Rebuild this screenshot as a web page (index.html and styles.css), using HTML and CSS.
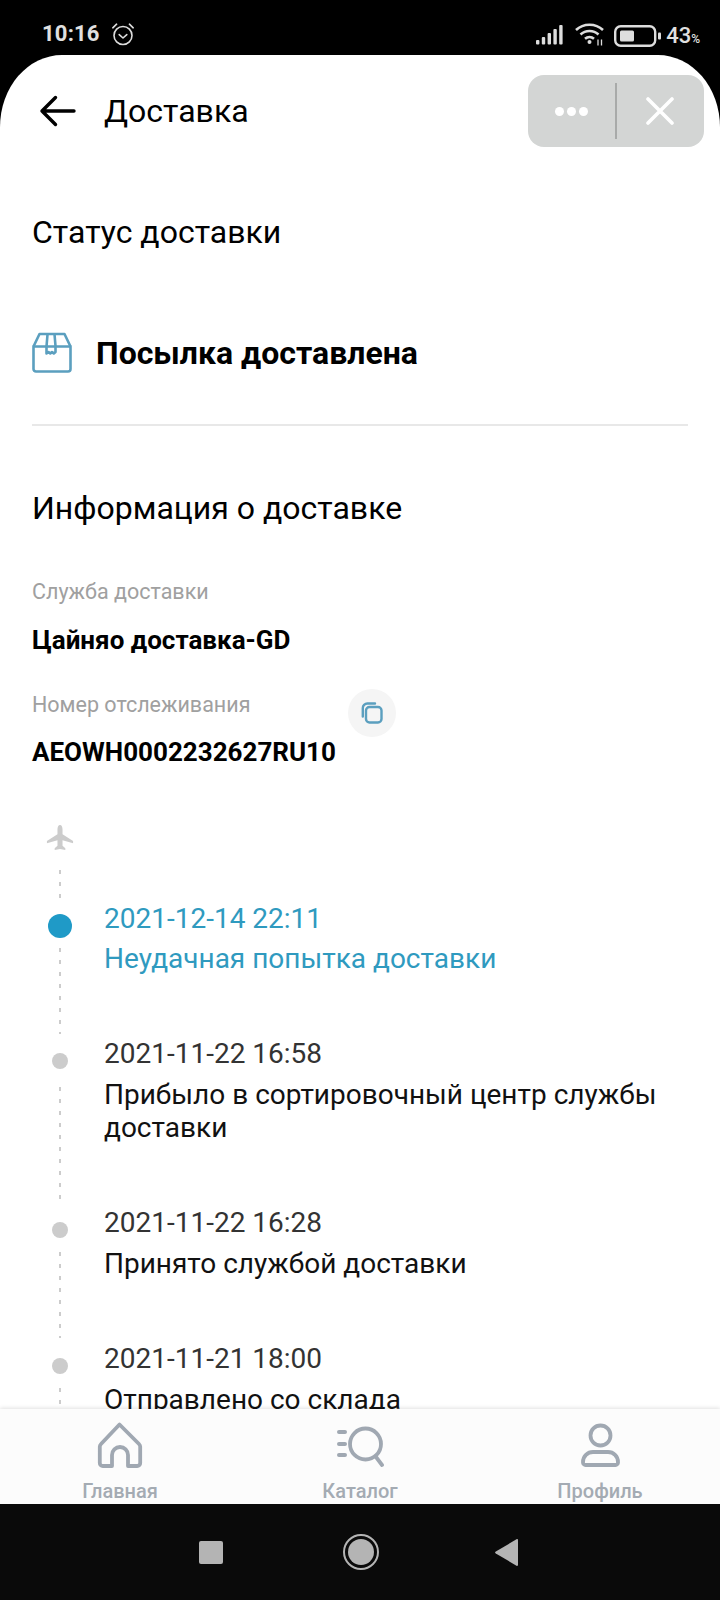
FILE: index.html
```html
<!DOCTYPE html>
<html lang="ru">

<head>
    <meta charset="UTF-8">
    <meta name="viewport" content="width=device-width, initial-scale=1.0">
    <title>Доставка</title>
    <link rel="stylesheet" href="styles.css">
</head>

<body>
    <div class="phone">
        <div class="statusbar">
            <div class="status-left">
                <span class="clock">10:16</span>
                <svg class="alarm" width="24" height="24" viewBox="0 0 24 24" fill="none" stroke="#ddd" stroke-width="1.6">
                    <circle cx="12" cy="13.500" r="9" />
                    <path d="M8.200 12.600l3.800 3.400 3.800-3.400" stroke-linecap="round" stroke-linejoin="round" />
                    <path d="M1.800 5.800l3.800-3.600M22.200 5.800L18.400 2.200" stroke-linecap="round" />
                </svg>
            </div>
            <div class="status-right">
                <svg class="signal" width="27" height="20" viewBox="0 0 27 20" fill="#ddd">
                    <rect x="0" y="15" width="3.400" height="4.500" rx="1" />
                    <rect x="5.800" y="12" width="3.400" height="7.500" rx="1" />
                    <rect x="11.600" y="8" width="3.400" height="11.500" rx="1" />
                    <rect x="17.400" y="4" width="3.400" height="15.500" rx="1" />
                    <rect x="23.200" y="0" width="3.400" height="19.500" rx="1" />
                </svg>
                <svg class="wifi" width="29" height="24" viewBox="0 0 29 24" fill="none" stroke="#ddd" stroke-width="2.600">
                    <path d="M1 8c7.500-7 19.500-7 27 0" />
                    <path d="M5.500 12.500c5-4.600 13-4.600 18 0" />
                    <path d="M10 16.800c2.600-2.200 6.400-2.200 9 0" />
                    <circle cx="14.500" cy="20" r="2" fill="#ddd" stroke="none" />
                    <path d="M23 17.500v6M26.500 17.500v6" stroke-width="1.300" />
                </svg>
                <svg class="battery-icon" width="47" height="22" viewBox="0 0 47 22" fill="none">
                    <rect x="1.200" y="1.200" width="40" height="19.600" rx="5.500" stroke="#ddd" stroke-width="2.400" />
                    <rect x="6" y="5.500" width="14" height="11" rx="1.500" fill="#ddd" />
                    <rect x="44" y="7.500" width="3" height="7" rx="1" fill="#ddd" />
                </svg>
                <span class="battery">43<small>%</small></span>
            </div>
        </div>

        <div class="sheet">
            <div class="topbar">
                <svg class="back" width="38" height="32" viewBox="0 0 38 32" fill="none" stroke="#000" stroke-width="3.400" stroke-linecap="round" stroke-linejoin="round">
                    <path d="M35 16H3M16.500 2.500L3 16l13.500 13.500" />
                </svg>
                <span class="page-title">Доставка</span>
                <div class="capsule">
                    <div class="capsule-more"><i></i><i></i><i></i></div>
                    <div class="capsule-line"></div>
                    <svg class="capsule-close" width="28" height="28" viewBox="0 0 28 28" stroke="#fff" stroke-width="3.600" stroke-linecap="round">
                        <path d="M2 2l24 24M26 2L2 26" />
                    </svg>
                </div>
            </div>

            <div class="content">
                <h2 class="section-title status-title">Статус доставки</h2>
                <div class="status-row">
                    <svg width="40" height="41" viewBox="0 0 40 41" fill="none" stroke="#5b9fbf" stroke-width="2.600" stroke-linejoin="round">
                        <path d="M1.500 14.500h37V37a2.500 2.500 0 0 1-2.500 2.500H4A2.500 2.500 0 0 1 1.500 37z" />
                        <path d="M1.500 14.500L7.500 2h25l6 12.500" />
                        <path d="M15.500 2.500l-1 12v7l2-1.500 1.800 1.500 1.700-1.500 1.800 1.500 1.700-1.500v-6l-1-12" />
                    </svg>
                    <span class="status-text">Посылка доставлена</span>
                </div>
                <div class="divider"></div>

                <h2 class="section-title info-title">Информация о доставке</h2>
                <div class="field-label label-service">Служба доставки</div>
                <div class="field-value">Цайняо доставка-GD</div>
                <div class="tracking-head">
                    <span class="field-label">Номер отслеживания</span>
                    <span class="copy-btn">
                        <svg width="22" height="22" viewBox="0 0 22 22" fill="none" stroke="#5b9fbf" stroke-width="2.400" stroke-linecap="round">
                            <rect x="5" y="5" width="15.500" height="15.500" rx="3.500" />
                            <path d="M1.800 14.500V6A4.500 4.500 0 0 1 6.300 1.500H14" />
                        </svg>
                    </span>
                </div>
                <div class="field-value tracking-value">AEOWH0002232627RU10</div>

                <div class="timeline">
                    <div class="tl-plane">
                        <svg width="28" height="27" viewBox="0 0 30 28" preserveAspectRatio="none" fill="#ccc">
                            <path d="M15 0c1.700 0 2.700 2 2.700 4.500v5.200L29 16.500v2.500l-11.300-3.200v5.800l3 2.400V26l-5.700-1.200L9.300 26v-2l3-2.400v-5.800L1 19v-2.500l11.300-6.800V4.500C12.300 2 13.300 0 15 0z" />
                        </svg>
                        <b class="tl-dash"></b>
                    </div>
                    <div class="tl-item tl-current">
                        <div class="tl-rail"><i class="tl-dot"></i><b class="tl-dash"></b></div>
                        <div class="tl-body">
                            <div class="tl-date">2021-12-14 22:11</div>
                            <div class="tl-text">Неудачная попытка доставки</div>
                        </div>
                    </div>
                    <div class="tl-item tl-two">
                        <div class="tl-rail"><i class="tl-dot"></i><b class="tl-dash"></b></div>
                        <div class="tl-body">
                            <div class="tl-date">2021-11-22 16:58</div>
                            <div class="tl-text">Прибыло в сортировочный центр службы доставки</div>
                        </div>
                    </div>
                    <div class="tl-item">
                        <div class="tl-rail"><i class="tl-dot"></i><b class="tl-dash"></b></div>
                        <div class="tl-body">
                            <div class="tl-date">2021-11-22 16:28</div>
                            <div class="tl-text">Принято службой доставки</div>
                        </div>
                    </div>
                    <div class="tl-item">
                        <div class="tl-rail"><i class="tl-dot"></i><b class="tl-dash"></b></div>
                        <div class="tl-body">
                            <div class="tl-date">2021-11-21 18:00</div>
                            <div class="tl-text">Отправлено со склада</div>
                        </div>
                    </div>
                </div>
            </div>

            <div class="tabbar">
                <div class="tab">
                    <svg width="48" height="48" viewBox="0 0 48 48" fill="none" stroke="#a0a8b2" stroke-width="3.800" stroke-linejoin="round">
                        <path d="M23.500 2.500L5 22a4 4 0 0 0-1.200 3V41a3 3 0 0 0 3 3H16V33a8 8 0 0 1 16 0V44h9.200a3 3 0 0 0 3-3V25a4 4 0 0 0-1.200-3z" />
                    </svg>
                    <span>Главная</span>
                </div>
                <div class="tab">
                    <svg width="48" height="48" viewBox="0 0 48 48" fill="none" stroke="#a0a8b2" stroke-width="3.800" stroke-linecap="round">
                        <circle cx="29.500" cy="22" r="15.500" />
                        <path d="M40 35l6 8" />
                        <path d="M3 10h6M3 22h6M3 33h6" stroke-width="4" />
                    </svg>
                    <span>Каталог</span>
                </div>
                <div class="tab">
                    <svg width="48" height="48" viewBox="0 0 48 48" fill="none" stroke="#a0a8b2" stroke-width="3.800" stroke-linejoin="round">
                        <circle cx="24.500" cy="13.500" r="10" />
                        <path d="M17 30h15a10 10 0 0 1 10 10v.5a2.500 2.500 0 0 1-2.500 2.500H9.500A2.500 2.500 0 0 1 7 40.500V40a10 10 0 0 1 10-10z" />
                    </svg>
                    <span>Профиль</span>
                </div>
            </div>
        </div>

        <div class="navbar">
            <div class="nav-square"></div>
            <div class="nav-circle"><div></div></div>
            <svg class="nav-back" width="23" height="27" viewBox="0 0 23 27" fill="#b4b4b4">
                <path d="M21.500 0.300c.9-.5 1.500 0 1.500 1v24.400c0 1-.6 1.500-1.500 1L.8 14.500c-1-.6-1-1.400 0-2z" />
            </svg>
        </div>
    </div>
</body>

</html>
```

FILE: styles.css
```css
* {
    box-sizing: border-box;
}

html,
body {
    margin: 0;
    padding: 0;
    background: #000;
}

body {
    font-family: Roboto, "Liberation Sans", sans-serif;
    color: #000;
}

.phone {
    width: 720px;
    height: 1600px;
    display: flex;
    flex-direction: column;
    overflow: hidden;
}

/* status bar */
.statusbar {
    height: 55px;
    flex: none;
    background: #000;
    color: #e0e0e0;
    display: flex;
    justify-content: space-between;
    padding: 21px 20px 0 42px;
}

.status-left,
.status-right {
    display: flex;
    align-items: flex-start;
}

.clock {
    font-size: 22px;
    line-height: 26px;
    font-weight: 700;
    letter-spacing: 0.2px;
}

.alarm {
    margin: 1px 0 0 11px;
}

.signal {
    margin-top: 4px;
}

.wifi {
    margin: 1px 0 0 12px;
}

.battery-icon {
    margin: 4px 0 0 10px;
}

.battery {
    font-size: 22px;
    line-height: 26px;
    font-weight: 500;
    margin: 2px 0 0 5px;
}

.battery small {
    font-size: 12px;
}

/* white sheet */
.sheet {
    flex: 1;
    min-height: 0;
    background: #fff;
    border-radius: 62px 62px 0 0 / 72px 72px 0 0;
    display: flex;
    flex-direction: column;
    overflow: hidden;
}

.topbar {
    height: 92px;
    flex: none;
    display: flex;
    align-items: center;
    padding: 19px 16px 0 39px;
}

.page-title {
    font-size: 32px;
    margin-left: 27px;
    flex: 1;
}

.capsule {
    width: 176px;
    height: 72px;
    margin-top: 1px;
    background: #d3d5d4;
    border-radius: 16px;
    display: flex;
    align-items: center;
}

.capsule-more {
    width: 87px;
    display: flex;
    justify-content: center;
    gap: 3px;
}

.capsule-more i {
    width: 9px;
    height: 9px;
    border-radius: 50%;
    background: #fff;
}

.capsule-line {
    width: 2px;
    height: 56px;
    background: #a8aaa9;
}

.capsule-close {
    margin-left: 29px;
}

/* main content */
.content {
    flex: 1;
    min-height: 0;
    overflow: hidden;
    padding: 0 32px;
}

.section-title {
    margin: 0;
    font-size: 32px;
    line-height: 38px;
    font-weight: 400;
}

.status-title {
    margin-top: 66px;
}

.status-row {
    display: flex;
    align-items: center;
    gap: 24px;
    margin-top: 81px;
}

.status-text {
    font-size: 32px;
    font-weight: 700;
    line-height: 40px;
}

.divider {
    height: 2px;
    background: #e8e8e8;
    margin-top: 51px;
}

.info-title {
    margin-top: 63px;
}

.field-label {
    font-size: 21.5px;
    line-height: 24px;
    color: #a0a0a0;
}

.label-service {
    margin-top: 53px;
}

.field-value {
    font-size: 26px;
    line-height: 30px;
    font-weight: 700;
    margin-top: 21px;
}

.tracking-head {
    display: flex;
    align-items: center;
    margin-top: 34px;
    height: 48px;
}

.tracking-head .field-label {
    margin-top: -16px;
}

.copy-btn {
    width: 48px;
    height: 48px;
    border-radius: 50%;
    background: #f5f5f5;
    display: flex;
    align-items: center;
    justify-content: center;
    margin-left: 98px;
}

.tracking-value {
    margin-top: 0;
}

/* timeline */
.timeline {
    margin-top: 58px;
}

.tl-plane {
    width: 56px;
    height: 75px;
    display: flex;
    flex-direction: column;
    align-items: center;
}

.tl-plane svg {
    flex: none;
}

.tl-dash {
    display: block;
    flex: none;
    width: 2px;
    height: 86px;
    margin-top: 14px;
    background: repeating-linear-gradient(#ccc 0 4px, transparent 4px 12px);
}

.tl-plane .tl-dash {
    height: 29px;
    margin-top: 18px;
}

.tl-item {
    display: flex;
    height: 136px;
}

.tl-current {
    height: 128px;
}

.tl-two {
    height: 169px;
}

.tl-two .tl-dash {
    height: 114px;
    margin-top: 18px;
}

.tl-rail {
    width: 56px;
    flex: none;
    display: flex;
    flex-direction: column;
    align-items: center;
}

.tl-dot {
    display: block;
    flex: none;
    width: 16px;
    height: 16px;
    border-radius: 50%;
    background: #ccc;
    margin-top: 25px;
}

.tl-current .tl-dot {
    width: 24px;
    height: 24px;
    background: #1f9ac7;
    margin-top: 14px;
}

.tl-current .tl-dash {
    margin-top: 10px;
}

.tl-body {
    margin-left: 16px;
    padding-top: 9px;
    flex: 1;
}

.tl-current .tl-body {
    padding-top: 2px;
}

.tl-date {
    font-size: 28px;
    line-height: 33px;
    color: #333;
}

.tl-text {
    font-size: 28px;
    line-height: 33px;
    margin-top: 8px;
    color: #111;
}

.tl-current .tl-date,
.tl-current .tl-text {
    color: #2f9abf;
}

.tl-current .tl-text {
    margin-top: 7px;
}

/* bottom tabs */
.tabbar {
    height: 95px;
    flex: none;
    background: #fcfcfc;
    box-shadow: 0 -1px 4px rgba(0, 0, 0, 0.12);
    display: flex;
    position: relative;
}

.tab {
    flex: 1;
    display: flex;
    flex-direction: column;
    align-items: center;
    padding-top: 13px;
}

.tab span {
    font-size: 20px;
    line-height: 22px;
    font-weight: 500;
    color: #a4abb3;
    margin-top: 10px;
}

/* android nav */
.navbar {
    height: 96px;
    flex: none;
    background: #0a0a0a;
    display: flex;
    align-items: center;
    justify-content: center;
    padding-right: 4px;
}

.nav-square {
    width: 24px;
    height: 23px;
    background: #b4b4b4;
    border-radius: 2px;
}

.nav-circle {
    width: 36px;
    height: 36px;
    margin-left: 120px;
    border: 2px solid #b4b4b4;
    border-radius: 50%;
    display: flex;
    align-items: center;
    justify-content: center;
}

.nav-circle div {
    width: 26px;
    height: 26px;
    border-radius: 50%;
    background: #b4b4b4;
}

.nav-back {
    margin-left: 116px;
}
```
